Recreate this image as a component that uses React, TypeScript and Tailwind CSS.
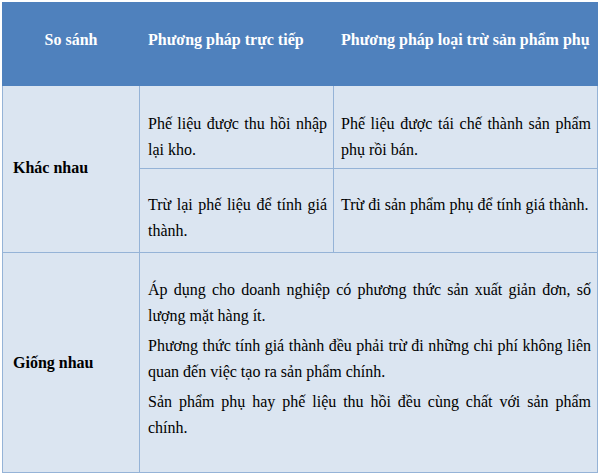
import React from 'react';

const serif = { fontFamily: '"Liberation Serif", "Times New Roman", serif' };

const App: React.FC = () => {
  return (
    <div className="w-[598px] h-[474px] bg-white pl-[2px] pt-[2px] text-black" style={serif}>
      <table className="table-fixed border-collapse w-[595px] text-[16px]" style={serif}>
        <colgroup>
          <col className="w-[137px]" />
          <col className="w-[194px]" />
          <col className="w-[264px]" />
        </colgroup>
        <thead>
          <tr className="h-[83px] bg-[#4f81bd] text-white font-bold">
            <th className="border border-[#4f81bd] text-center align-middle pb-[9px] font-bold">So sánh</th>
            <th className="border border-[#4f81bd] text-left align-middle pl-[8px] pb-[9px] font-bold">
              Phương pháp trực tiếp
            </th>
            <th className="border border-[#4f81bd] text-left align-middle pl-[7px] pb-[9px] font-bold">
              Phương pháp loại trừ sản phẩm phụ
            </th>
          </tr>
        </thead>
        <tbody className="bg-[#dbe5f1] leading-[26px]">
          <tr className="h-[83px]">
            <td rowSpan={2} className="border border-[#95b3d7] align-middle pl-[10px] pb-[3px] font-bold">
              Khác nhau
            </td>
            <td className="border border-[#95b3d7] align-top pt-[25px] pl-[8px] pr-[6px] text-justify">
              Phế liệu được thu hồi nhập lại kho.
            </td>
            <td className="border border-[#95b3d7] align-top pt-[25px] pl-[7px] pr-[6px] text-justify">
              Phế liệu được tái chế thành sản phẩm phụ rồi bán.
            </td>
          </tr>
          <tr className="h-[84px]">
            <td className="border border-[#95b3d7] align-top pt-[23px] pl-[8px] pr-[6px] text-justify">
              Trừ lại phế liệu để tính giá thành.
            </td>
            <td className="border border-[#95b3d7] align-top pt-[23px] pl-[7px] pr-[6px] text-justify">
              Trừ đi sản phẩm phụ để tính giá thành.
            </td>
          </tr>
          <tr className="h-[220px]">
            <td className="border border-[#95b3d7] align-middle pl-[10px] font-bold">Giống nhau</td>
            <td colSpan={2} className="border border-[#95b3d7] align-top pt-[24px] pl-[8px] pr-[6px] text-justify">
              <p className="mb-[4px]">
                Áp dụng cho doanh nghiệp có phương thức sản xuất giản đơn, số lượng mặt hàng ít.
              </p>
              <p className="mb-[4px]">
                Phương thức tính giá thành đều phải trừ đi những chi phí không liên quan đến việc tạo ra sản phẩm chính.
              </p>
              <p>Sản phẩm phụ hay phế liệu thu hồi đều cùng chất với sản phẩm chính.</p>
            </td>
          </tr>
        </tbody>
      </table>
    </div>
  );
};

export default App;
